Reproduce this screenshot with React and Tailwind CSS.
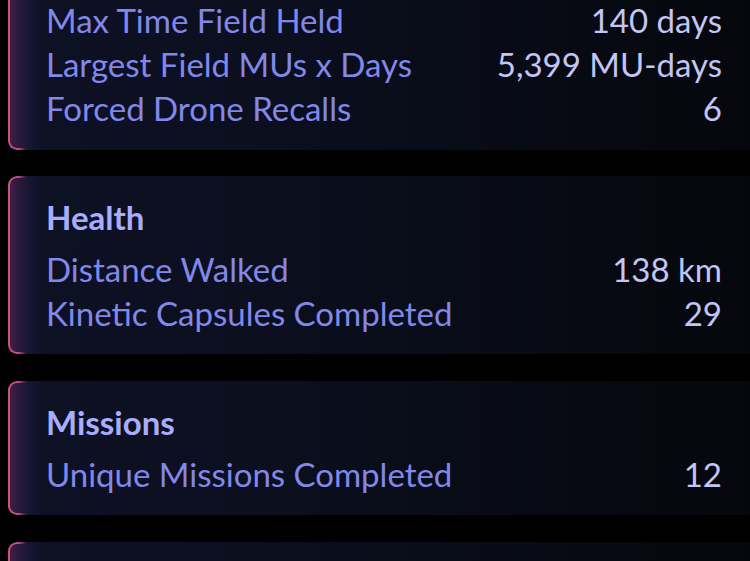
import React from "react";

const font = { fontFamily: "Lato, 'Open Sans', sans-serif" };

const bg =
  "bg-[linear-gradient(to_right,#4a1c44_0px,#2c1a3f_10px,#141731_22px,#0d1124_36px,#0a0e1c_45%,#05070c_100%)]";

function Row({ label, value }) {
  return (
    <div className="flex h-[44px] items-center justify-between">
      <span className="text-[#8288ea]">{label}</span>
      <span className="text-[#c3c5f4]">{value}</span>
    </div>
  );
}

function Card({ title, rows, className = "" }) {
  return (
    <div
      className={
        "relative ml-2 rounded-l-[9px] bg-[linear-gradient(to_right,#4a1c44_0px,#2c1a3f_10px,#141731_22px,#0d1124_36px,#0a0e1c_45%,#05070c_100%)] pb-[19px] pl-[38px] pr-[28px] " +
        className
      }
    >
      <div className="pointer-events-none absolute inset-y-0 left-0 w-[18px] rounded-l-[9px] border-y-2 border-l-2 border-r-0 border-[#c8517f] [mask-image:linear-gradient(to_right,black_55%,transparent)]" />
      {title && (
        <div className="mb-[8px] flex h-[44px] items-center text-[33px] font-bold text-[#a9adff]">
          {title}
        </div>
      )}
      {rows.map((r) => (
        <Row key={r[0]} label={r[0]} value={r[1]} />
      ))}
    </div>
  );
}

export default function App() {
  return (
    <div className="h-[561px] w-[750px] overflow-hidden bg-black text-[33px] leading-none" style={font}>
      <Card
        className="mt-[-30px] pt-[28px] !pb-[20px]"
        rows={[
          ["Max Time Field Held", "140 days"],
          ["Largest Field MUs x Days", "5,399 MU-days"],
          ["Forced Drone Recalls", "6"],
        ]}
      />
      <div className="h-[26px]" />
      <Card
        title="Health"
        className="pt-[19px]"
        rows={[
          ["Distance Walked", "138 km"],
          ["Kinetic Capsules Completed", "29"],
        ]}
      />
      <div className="h-[27px]" />
      <Card title="Missions" className="pt-[19px]" rows={[["Unique Missions Completed", "12"]]} />
      <div className="h-[27px]" />
      <div className={"relative ml-2 h-[40px] rounded-tl-[9px] " + bg}>
        <div className="pointer-events-none absolute inset-y-0 left-0 w-[18px] rounded-tl-[9px] border-l-2 border-t-2 border-[#c8517f] [mask-image:linear-gradient(to_right,black_55%,transparent)]" />
      </div>
    </div>
  );
}
